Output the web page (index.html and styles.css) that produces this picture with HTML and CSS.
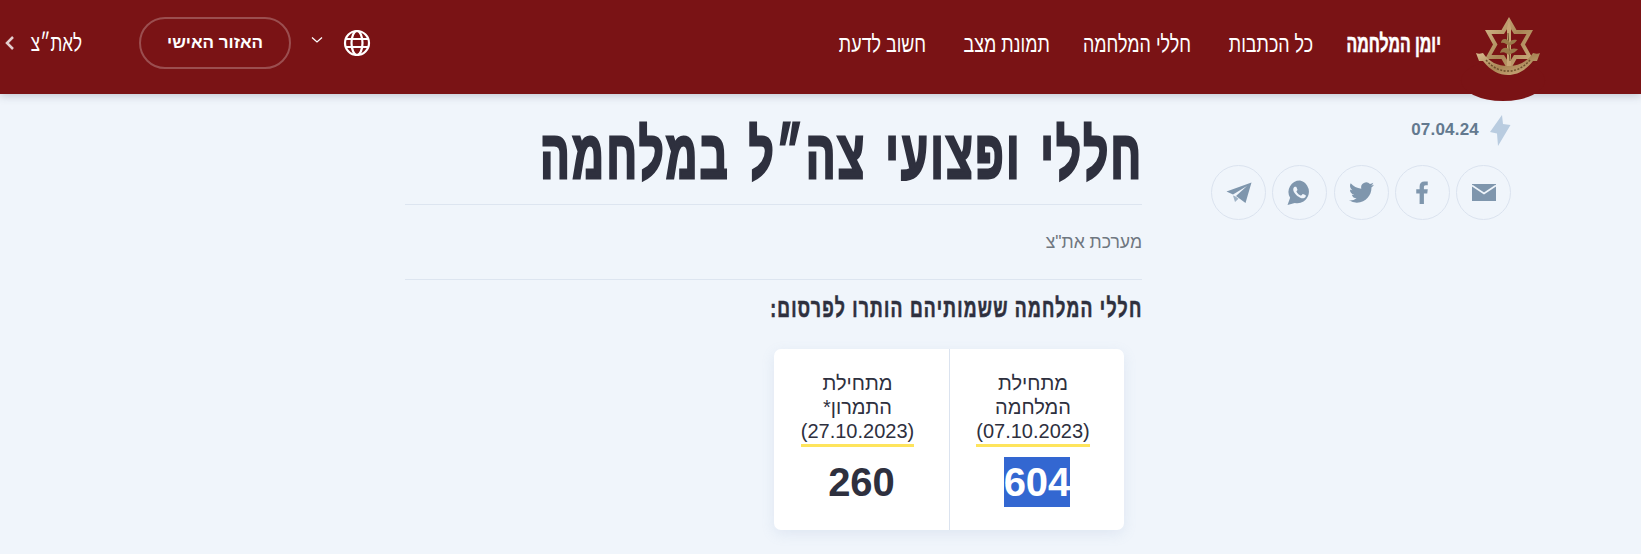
FILE: index.html
```html
<!DOCTYPE html>
<html lang="he" dir="rtl">

<head>
    <meta charset="UTF-8">
    <title>חללי ופצועי צה"ל במלחמה</title>

    <link rel="stylesheet" href="styles.css">
</head>

<body>
    <header class="topbar">
        <div class="topbar-right">
            <a class="logo">
                <svg width="66" height="60" viewBox="0 0 66 60">
                    <defs>
                        <linearGradient id="gold" x1="0" y1="0" x2="1" y2="1">
                            <stop offset="0" stop-color="#d8bd90"/>
                            <stop offset="0.5" stop-color="#a98555"/>
                            <stop offset="1" stop-color="#d3b486"/>
                        </linearGradient>
                    </defs>
                    <path d="M34 1 L41.500 14 L58 14 L50 28.500 L58 43 L41.500 43 L34 56 L26.500 43 L10 43 L18 28.500 L10 14 L26.500 14 Z M34 10 L29 18 L16.500 18 L22.500 28.500 L16.500 39 L29 39 L34 47 L39 39 L51.500 39 L45.500 28.500 L51.500 18 L39 18 Z" fill="url(#gold)" fill-rule="evenodd"/>
                    <path d="M34 4 L36 12 L36 50 L32 50 L32 12 Z" fill="#c7a676"/>
                    <path d="M33 17 L35 45" stroke="#6b4e2a" stroke-width="1" fill="none"/>
                    <path d="M34 25 C29 21 26 24 26 27 C29 26 31 28 34 30 C37 28 40 28 42 24 C38 23 36 24 34 27 Z M34 33 C29 30 26 33 25 37 C29 35 31 37 34 39 C37 37 40 37 43 33 C39 32 36 32 34 35 Z" fill="#9a7a4a"/>
                    <path d="M1 37 C3 38 5 38 8 37 C14 46 23 50 33 50 C43 50 52 46 58 37 C61 38 63 38 65 37 L62 45 L58 45 C50 55 42 59 33 59 C24 59 16 55 8 45 L4 45 Z" fill="url(#gold)"/>
                    <path d="M11 44 C18 52 25 55 33 55 C41 55 48 52 55 44" fill="none" stroke="#6a4e2b" stroke-width="1.500" stroke-dasharray="2 1.500"/>
                </svg>
            </a>
            <nav class="mainnav">
                <a class="navitem navitem-active navitem-w1"><span>יומן המלחמה</span></a>
                <a class="navitem navitem-w2"><span>כל הכתבות</span></a>
                <a class="navitem navitem-w3"><span>חללי המלחמה</span></a>
                <a class="navitem navitem-w4"><span>תמונת מצב</span></a>
                <a class="navitem navitem-w4"><span>חשוב לדעת</span></a>
            </nav>
        </div>
        <div class="topbar-left">
            <a class="lang">
                <svg width="28" height="28" viewBox="0 0 28 28" fill="none" stroke="#fff" stroke-width="2.200">
                    <circle cx="14" cy="14" r="12"/>
                    <ellipse cx="14" cy="14" rx="5.500" ry="12"/>
                    <path d="M2 10 H26 M2 18 H26"/>
                </svg>
                <svg class="lang-arrow" width="12" height="8" viewBox="0 0 12 8" fill="none" stroke="#fff" stroke-width="1.300">
                    <path d="M1 1.500 L6 6 L11 1.500"/>
                </svg>
            </a>
            <a class="personal">האזור האישי</a>
            <a class="sitelink">
                <span class="sitelink-text"><span>לאת״צ</span></span>
                <svg width="10" height="16" viewBox="0 0 10 16" fill="none" stroke="#e3cfcf" stroke-width="2.500">
                    <path d="M8 2 L2 8 L8 14"/>
                </svg>
            </a>
        </div>
    </header>

    <main class="page">
        <aside class="side">
            <div class="date">
                <svg width="21" height="31" viewBox="0 0 21 31">
                    <path d="M12 0 L0 17 L7 18.500 L8 31 L20.500 10 L13 9 Z" fill="#b9cce0"/>
                </svg>
                <span>07.04.24</span>
            </div>
            <div class="share">
                <a class="share-btn">
                    <svg width="24" height="17" viewBox="0 0 24 17"><path d="M0 0 H24 V17 H0 Z" fill="#7f96ad"/><path d="M0 1.500 L12 9.500 L24 1.500" fill="none" stroke="#f0f5fb" stroke-width="1.800"/></svg>
                </a>
                <a class="share-btn">
                    <svg width="12" height="23" viewBox="7 0 12 24"><path d="M15 24V13h3.500l.5-4.500h-4V6.500c0-1.200.4-2 2-2h2V.6C18.200.5 17 .5 15.500.5c-3 0-5 1.800-5 5.100v2.900H7V13h3.500v11z" fill="#7f96ad"/></svg>
                </a>
                <a class="share-btn">
                    <svg width="25" height="25" viewBox="0 0 24 24"><path d="M23.953 4.570a10 10 0 01-2.825.775 4.958 4.958 0 002.163-2.723c-.951.555-2.005.959-3.127 1.184a4.920 4.920 0 00-8.384 4.482C7.690 8.095 4.067 6.130 1.640 3.162a4.822 4.822 0 00-.666 2.475c0 1.710.870 3.213 2.188 4.096a4.904 4.904 0 01-2.228-.616v.060a4.923 4.923 0 003.946 4.827 4.996 4.996 0 01-2.212.085 4.936 4.936 0 004.604 3.417 9.867 9.867 0 01-6.102 2.105c-.390 0-.779-.023-1.170-.067a13.995 13.995 0 007.557 2.209c9.053 0 13.998-7.496 13.998-13.985 0-.210 0-.420-.015-.630A9.935 9.935 0 0024 4.590z" fill="#7f96ad"/></svg>
                </a>
                <a class="share-btn">
                    <svg width="25" height="25" viewBox="0 0 24 24"><path d="M12.500 0.500a11 11 0 0 0-9.500 16.600L0.500 24l7-2a11 11 0 1 0 5-21.500z" fill="#7f96ad"/><path d="M17.472 14.382c-.297-.149-1.758-.867-2.030-.967-.273-.099-.471-.148-.670.150-.197.297-.767.966-.940 1.164-.173.199-.347.223-.644.075-.297-.150-1.255-.463-2.390-1.475-.883-.788-1.480-1.761-1.653-2.059-.173-.297-.018-.458.130-.606.134-.133.298-.347.446-.520.149-.174.198-.298.298-.497.099-.198.050-.371-.025-.520-.075-.149-.669-1.612-.916-2.207-.242-.579-.487-.500-.669-.510-.173-.008-.371-.010-.570-.010-.198 0-.520.074-.792.372-.272.297-1.040 1.016-1.040 2.479 0 1.462 1.065 2.875 1.213 3.074.149.198 2.096 3.200 5.077 4.487.709.306 1.262.489 1.694.625.712.227 1.360.195 1.871.118.571-.085 1.758-.719 2.006-1.413.248-.694.248-1.289.173-1.413-.074-.124-.272-.198-.570-.347z" fill="#f0f5fb"/></svg>
                </a>
                <a class="share-btn">
                    <svg width="26" height="22" viewBox="0 0 26 22"><path d="M25.500 0.500 L0.500 9.500 L7 12.500 L21 4 L10 14 L19.500 21 Z" fill="#7f96ad"/><path d="M7 13.500 L9 20 L12.500 16.800 L9.500 14.500 Z" fill="#9fb2c5"/></svg>
                </a>
            </div>
        </aside>

        <article class="article">
            <h1 class="title"><span>חללי ופצועי צה״ל במלחמה</span></h1>
            <div class="byline">מערכת את"צ</div>
            <h2 class="subtitle"><span>חללי המלחמה ששמותיהם הותרו לפרסום:</span></h2>
            <div class="tablewrap">
                <div class="stats">
                    <div class="stat">
                        <div class="stat-label">מתחילת<br>המלחמה<br><span class="stat-date">(07.10.2023)</span></div>
                        <div class="stat-num"><span class="selected">604</span></div>
                    </div>
                    <div class="stat">
                        <div class="stat-label">מתחילת<br>התמרון*<br><span class="stat-date">(27.10.2023)</span></div>
                        <div class="stat-num"><span>260</span></div>
                    </div>
                </div>
            </div>
        </article>
    </main>
</body>

</html>
```

FILE: styles.css
```css
body,
html {
    width: 100%;
    height: 100%;
    margin: 0;
    padding: 0;
    overflow: hidden;
}

body {
    background: #f0f5fb;
    font-family: 'Liberation Sans', sans-serif;
    color: #2e303e;
}

.topbar {
    position: relative;
    height: 94px;
    background: #7a1315;
    box-shadow: 0 2px 8px rgba(60, 70, 90, 0.25);
    display: flex;
    justify-content: space-between;
    color: #fff;
}

/* round bump under the logo */
.topbar::after {
    content: '';
    position: absolute;
    top: 60px;
    right: 96px;
    width: 84px;
    height: 41px;
    border-radius: 50%;
    background: #7a1315;
}

.topbar-right {
    display: flex;
    align-items: flex-start;
}

.topbar-left {
    display: flex;
    align-items: center;
    padding-bottom: 8px;
}

.logo {
    position: relative;
    z-index: 1;
    margin: 16px 100px 0 34px;
    display: block;
    width: 66px;
    height: 60px;
}

.mainnav {
    display: flex;
    gap: 35px;
    padding-top: 31px;
}

.navitem {
    display: block;
    white-space: nowrap;
    font-size: 24px;
    line-height: 26px;
}

.navitem span {
    display: inline-block;
    transform: scaleX(0.745);
    transform-origin: right center;
}

.navitem-active {
    font-weight: bold;
}

.navitem-active span {
    transform: scaleX(0.66);
    -webkit-text-stroke: 0.6px #fff;
}

.navitem-w1 {
    width: 93px;
}

.navitem-w2 {
    width: 87px;
}

.navitem-w3 {
    width: 106px;
}

.navitem-w4 {
    width: 89px;
}

.lang {
    display: flex;
    align-items: center;
    gap: 20px;
    margin-left: 20px;
}

.lang-arrow {
    margin-bottom: 6px;
}

.personal {
    display: block;
    width: 152px;
    height: 52px;
    box-sizing: border-box;
    border: 2px solid rgba(255, 255, 255, 0.25);
    border-radius: 26px;
    text-align: center;
    font-size: 17px;
    font-weight: bold;
    line-height: 47px;
    margin-left: 57px;
}

.sitelink {
    display: flex;
    align-items: center;
    gap: 16px;
    margin-left: 5px;
}

.sitelink-text {
    display: block;
    width: 51px;
    font-size: 24px;
    white-space: nowrap;
}

.sitelink-text span {
    display: inline-block;
    transform: scaleX(0.71);
    transform-origin: right center;
}

.page {
    display: flex;
    padding-right: 130px;
}

.side {
    width: 300px;
    margin-left: 69px;
}

.date {
    display: flex;
    align-items: center;
    gap: 11px;
    padding-top: 21px;
    font-size: 17px;
    font-weight: bold;
    letter-spacing: 0.2px;
    color: #63798f;
}

.date span {
    margin-bottom: 2px;
}

.share {
    display: flex;
    justify-content: space-between;
    margin-top: 19px;
}

.share-btn {
    display: flex;
    align-items: center;
    justify-content: center;
    width: 55px;
    height: 55px;
    box-sizing: border-box;
    border: 1px solid #dbe3ef;
    border-radius: 50%;
}

.article {
    width: 737px;
}

.title {
    margin: 0;
    height: 111px;
    border-bottom: 1px solid #dde5f0;
    font-size: 68px;
    line-height: 88px;
    font-weight: bold;
    white-space: nowrap;
    padding-top: 16px;
    box-sizing: border-box;
}

.title span {
    display: inline-block;
    margin-right: -2px;
    transform: scaleX(0.64);
    transform-origin: right center;
    letter-spacing: 4px;
    word-spacing: 6px;
    -webkit-text-stroke: 3px #2e303e;
}

.byline {
    height: 75px;
    box-sizing: border-box;
    border-bottom: 1px solid #dde5f0;
    padding-top: 27px;
    font-size: 17.6px;
    color: #6f7780;
}

.subtitle {
    margin: 13px 0 0;
    font-size: 26px;
    line-height: 30px;
    font-weight: bold;
    white-space: nowrap;
}

.subtitle span {
    display: inline-block;
    transform: scaleX(0.68);
    transform-origin: right center;
    letter-spacing: 1.8px;
    -webkit-text-stroke: 0.6px #2e303e;
}

.tablewrap {
    padding: 26px 18px 0 0;
}

.stats {
    display: flex;
    width: 350px;
    height: 181px;
    background: #fff;
    border-radius: 7px;
    box-shadow: 0 4px 14px rgba(120, 150, 190, 0.14);
}

.stat {
    width: 175px;
    box-sizing: border-box;
    text-align: center;
    padding-top: 22px;
    font-size: 20px;
}

.stat:first-child {
    border-left: 1px solid #dbe3ef;
}

.stat-label {
    line-height: 24px;
    padding-right: 8px;
}

.stat-date {
    display: inline-block;
    border-bottom: 3px solid #fee45c;
    line-height: 25px;
}

.stat-num {
    margin-top: 10px;
    font-size: 40px;
    font-weight: bold;
    line-height: 50px;
}

.stat-num span {
    display: inline-block;
}

.selected {
    background: #3367d1;
    color: #fff;
}
```
